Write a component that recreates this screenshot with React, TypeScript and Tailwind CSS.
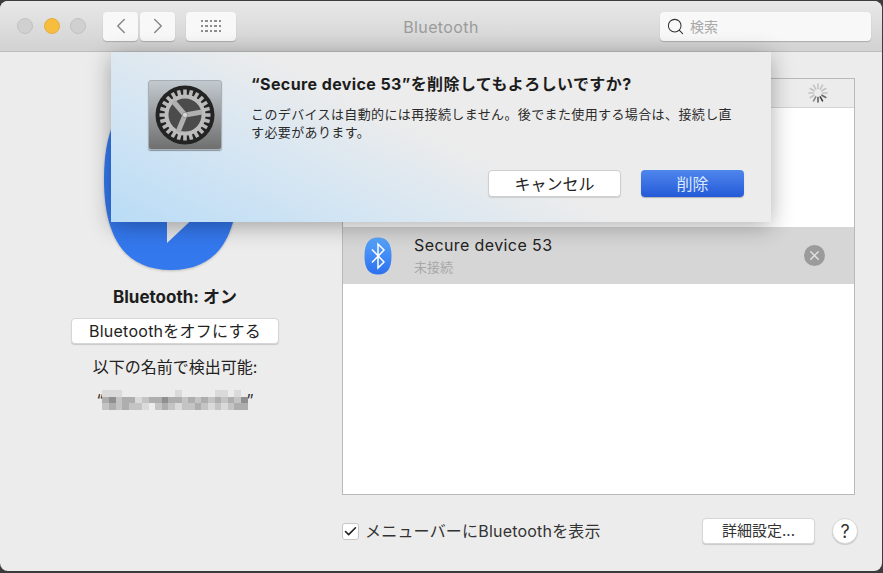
import { ChevronLeft, ChevronRight, Search, X, Check } from "lucide-react";

const mosaic = [
  "ddd--------d-----dd-d-",
  "bacbbdcbbabbcbcbcbcbca",
  "cbcbccd-cbcdccbcdcdcbb",
];

const mosaicColors: Record<string, string> = { a: "#8f8f8f", b: "#aeaeae", c: "#c4c4c4", d: "#dadada" };

function GearIcon() {
  const teeth = Array.from({ length: 24 }, (_, i) => i * 15);
  return (
    <div className="w-[74px] h-[70px] rounded-[3px] bg-gradient-to-b from-[#c3cacf] to-[#6f6f6f] border border-[#a8b0b5] shadow-[0_1px_1px_rgba(0,0,0,0.35)] flex items-center justify-center">
      <svg width="60" height="60" viewBox="0 0 60 60">
        <circle cx="30" cy="30" r="29.5" fill="#232323" />
        {teeth.map((a) => (
          <rect key={a} x="28.2" y="4.5" width="3.6" height="6" fill="#b9b9b9" transform={`rotate(${a} 30 30)`} />
        ))}
        <circle cx="30" cy="30" r="18.5" fill="#4b4b4b" stroke="#bdbdbd" strokeWidth="4" />
        <path d="M30 30 L18 16 M30 30 L47 27 M30 30 L23 47" stroke="#b0b0b0" strokeWidth="5" fill="none" />
        <circle cx="30" cy="30" r="2.6" fill="#d8d8d8" stroke="#777" strokeWidth="0.6" />
      </svg>
    </div>
  );
}

function Spinner() {
  const spokes = Array.from({ length: 12 }, (_, i) => i);
  return (
    <svg width="20" height="20" viewBox="0 0 20 20">
      {spokes.map((i) => (
        <line
          key={i}
          x1="10"
          y1="1"
          x2="10"
          y2="5.5"
          stroke="#333"
          strokeWidth="1.6"
          strokeLinecap="round"
          opacity={i >= 5 && i <= 7 ? 0.95 - (i - 5) * 0.2 : i === 4 ? 0.7 : 0.22}
          transform={`rotate(${i * 30} 10 10)`}
        />
      ))}
    </svg>
  );
}

function BigBluetooth() {
  return (
    <svg width="134" height="182" viewBox="0 0 134 182" className="drop-shadow-[0_1px_1px_rgba(0,0,0,0.2)]">
      <path d="M67 0C115 0 134 35 134 91C134 147 115 182 67 182C19 182 0 147 0 91C0 35 19 0 67 0Z" fill="#3478ee" />
      <path d="M63 155L63 91L97 123Z" fill="#e6e6e6" />
      <path d="M63 27L63 91L97 59Z" fill="#e6e6e6" />
    </svg>
  );
}

function SmallBluetooth() {
  return (
    <svg width="28" height="38" viewBox="0 0 28 38">
      <defs>
        <linearGradient id="smallBt" x1="0" y1="0" x2="0" y2="1">
          <stop offset="0" stopColor="#58a5fb" />
          <stop offset="1" stopColor="#2c70ee" />
        </linearGradient>
      </defs>
      <path d="M14 0.5C23 0.5 27.5 6 27.5 19C27.5 32 23 37.5 14 37.5C5 37.5 0.5 32 0.5 19C0.5 6 5 0.5 14 0.5Z" fill="url(#smallBt)" />
      <path d="M8 12.5L20 25L14 31V7L20 13L8 25.5" fill="none" stroke="#fff" strokeWidth="1.5" />
    </svg>
  );
}

export default function App() {
  return (
    <div className="relative w-[883px] h-[573px] bg-[#3c3c3c] pt-px overflow-hidden font-['Inter','Noto_Sans_CJK_JP',sans-serif] text-[#222]">
      <div className="relative w-[882px] h-[570px] rounded-[8px] overflow-hidden bg-[#ececec] flex flex-col">
        {/* Title bar */}
        <div className="relative h-[51px] shrink-0 flex items-center pl-[17px] pr-[11px] bg-gradient-to-b from-[#e8e8e8] to-[#d2d2d2] border-b border-[#bdbdbd]">
          <div className="flex gap-[10.5px]">
            <div className="w-4 h-4 rounded-full bg-[#d0d0d0] border border-[#c2c2c2]" />
            <div className="w-4 h-4 rounded-full bg-[#f6bd3f] border border-[#e6ae3a]" />
            <div className="w-4 h-4 rounded-full bg-[#d0d0d0] border border-[#c2c2c2]" />
          </div>
          <div className="ml-[17px] flex gap-[2px]">
            <div className="w-[35px] h-[29px] rounded-[4px] bg-[#f8f8f8] shadow-[0_1px_1px_rgba(0,0,0,0.2)] flex items-center justify-center text-[#8a8a8a]">
              <ChevronLeft size={26} strokeWidth={1.4} />
            </div>
            <div className="w-[35px] h-[29px] rounded-[4px] bg-[#f8f8f8] shadow-[0_1px_1px_rgba(0,0,0,0.2)] flex items-center justify-center text-[#8a8a8a]">
              <ChevronRight size={26} strokeWidth={1.4} />
            </div>
          </div>
          <div className="ml-[11px] w-[50px] h-[29px] rounded-[4px] bg-[#f8f8f8] shadow-[0_1px_1px_rgba(0,0,0,0.2)] flex items-center justify-center">
            <div className="grid grid-cols-5 gap-x-[2px] gap-y-[2.5px]">
              {Array.from({ length: 15 }, (_, i) => (
                <span key={i} className="w-[2.5px] h-[2.5px] bg-[#8c8c8c]" />
              ))}
            </div>
          </div>
          <div className="flex-1 pt-px text-center text-[16px] tracking-[0.4px] text-[#9b9b9b] pr-[14px]">Bluetooth</div>
          <div className="w-[211px] h-[29px] rounded-[4px] bg-[#f8f8f8] shadow-[0_1px_1px_rgba(0,0,0,0.2)] flex items-center pl-[6px] gap-[5px]">
            <Search size={19} strokeWidth={1.3} className="text-[#333] shrink-0" />
            <span className="text-[14px] text-[#a9a9a9]">検索</span>
          </div>
        </div>

        {/* Content */}
        <div className="flex-1 flex min-h-0">
          <div className="w-[343px] shrink-0 flex flex-col items-center pt-[36px] pl-[7px]">
            <div className="mr-[8px]">
              <BigBluetooth />
            </div>
            <div className="mt-[17px] text-[17px] leading-[20px] font-bold text-[#1d1d1d]">Bluetooth: オン</div>
            <div className="mt-[11px] w-[208px] h-[26px] rounded-[4px] bg-white border border-[#d6d6d6] shadow-[0_1px_1px_rgba(0,0,0,0.15)] flex items-center justify-center text-[16px] tracking-[0.25px]">
              Bluetoothをオフにする
            </div>
            <div className="mt-[13px] text-[16px] leading-[20px]">以下の名前で検出可能:</div>
            <div className="mt-[13px] flex items-center text-[16px] leading-[20px] text-[#333]">
              <span className="-mr-[1px]">“</span>
              <div className="flex flex-col blur-[0.6px]">
                {mosaic.map((row, r) => (
                  <div key={r} className="flex">
                    {row.split("").map((c, i) => (
                      <span
                        key={i}
                        className="w-[6.6px] h-[6.6px]"
                        style={{ backgroundColor: mosaicColors[c] ?? "transparent" }}
                      />
                    ))}
                  </div>
                ))}
              </div>
              <span className="-ml-[1px]">”</span>
            </div>
          </div>

          <div className="w-[513px] -ml-px pt-[26px] flex flex-col">
            <div className="h-[417px] bg-white border border-[#b9b9b9] flex flex-col">
              <div className="h-[29px] shrink-0 bg-[#ececec] border-b border-[#d4d4d4] flex items-center justify-end pr-[26px]">
                <Spinner />
              </div>
              <div className="mt-[119px] h-[57px] bg-[#d6d6d6] flex items-center pl-[21px] pr-[29px]">
                <SmallBluetooth />
                <div className="ml-[22px] flex-1">
                  <div className="text-[16px] leading-[20px] tracking-[0.4px] text-[#222]">Secure device 53</div>
                  <div className="mt-[4px] text-[13px] leading-[17px] text-[#a8a8a8]">未接続</div>
                </div>
                <div className="w-[21px] h-[21px] rounded-full bg-[#9b9b9b] flex items-center justify-center text-[#e2e2e2]">
                  <X size={15} strokeWidth={2.2} />
                </div>
              </div>
            </div>
            <div className="mt-[23px] flex items-center w-[517px]">
              <div className="w-[17px] h-[17px] rounded-[3px] bg-white border border-[#c6c6c6] flex items-center justify-center">
                <Check size={15} strokeWidth={2.6} className="text-[#222]" />
              </div>
              <span className="ml-[6px] text-[16px] tracking-[0.2px] text-[#333]">メニューバーにBluetoothを表示</span>
              <div className="ml-auto w-[113px] h-[26px] rounded-[4px] bg-white border border-[#d6d6d6] shadow-[0_1px_1px_rgba(0,0,0,0.15)] flex items-center justify-center text-[15px] text-[#333]">
                詳細設定...
              </div>
              <div className="ml-[17px] mr-px w-[26px] h-[26px] rounded-full bg-white border border-[#d6d6d6] shadow-[0_1px_1px_rgba(0,0,0,0.15)] flex items-center justify-center text-[18px] text-[#333]">
                ?
              </div>
            </div>
          </div>
        </div>

        {/* Alert sheet */}
        <div className="absolute left-[111px] top-[51px] w-[660px] h-[170px] flex pl-[37px] pt-[28px] bg-[linear-gradient(25deg,#b9dcf6_0%,#d3e5f3_25%,#ececec_50%)] shadow-[0_4px_22px_rgba(0,0,0,0.32)]">
          <GearIcon />
          <div className="ml-[29px] flex-1 pr-[27px] flex flex-col">
            <div className="-mt-[7px] text-[16px] tracking-[0.4px] leading-[22px] font-bold text-[#1c1c1c]">“Secure device 53”を削除してもよろしいですか?</div>
            <p className="mt-[10px] text-[13px] tracking-[0.38px] leading-[18px] text-[#2b2b2b]">
              このデバイスは自動的には再接続しません。後でまた使用する場合は、接続し直
              <br />
              す必要があります。
            </p>
            <div className="mt-[29px] flex justify-end gap-[20px]">
              <div className="w-[133px] h-[27px] rounded-[4px] bg-white border border-[#cfcfcf] shadow-[0_1px_1px_rgba(0,0,0,0.12)] flex items-center justify-center text-[16px] text-[#222]">
                キャンセル
              </div>
              <div className="w-[103px] h-[27px] rounded-[4px] bg-gradient-to-b from-[#4f86ec] to-[#2559d8] shadow-[0_1px_1px_rgba(0,0,0,0.25)] flex items-center justify-center text-[16px] text-[#dce8fb]">
                削除
              </div>
            </div>
          </div>
        </div>
      </div>
    </div>
  );
}
